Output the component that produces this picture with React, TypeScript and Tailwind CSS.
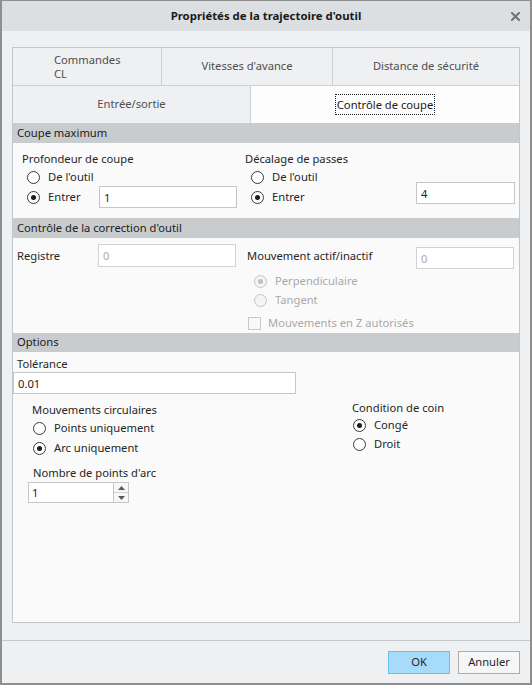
import React from "react";

type RadioProps = {
  label: string;
  checked?: boolean;
  disabled?: boolean;
  row?: string;
};

function Radio({ label, checked = false, disabled = false, row = "h-[20px]" }: RadioProps) {
  return (
    <div className={`flex items-center ${row}`}>
      <span
        className={`flex h-[13px] w-[13px] shrink-0 items-center justify-center rounded-full border ${
          disabled ? "border-[#c4c4c4] bg-[#f4f4f4]" : "border-[#3a3a3a] bg-white"
        }`}
      >
        {checked && (
          <span className={`h-[5px] w-[5px] rounded-full ${disabled ? "bg-[#c0c0c0]" : "bg-[#1c1c1c]"}`} />
        )}
      </span>
      <span className={`ml-[8px] whitespace-nowrap ${disabled ? "text-[#a9a9a9]" : "text-[#262626]"}`}>{label}</span>
    </div>
  );
}

function Field({ value, disabled = false, className }: { value: string; disabled?: boolean; className: string }) {
  return (
    <input
      readOnly
      value={value}
      disabled={disabled}
      className={`border bg-white px-[4px] outline-none ${
        disabled ? "border-[#d2d2d2] text-[#ababab]" : "border-[#c6c6c6] text-[#1c1c1c]"
      } ${className}`}
    />
  );
}

function SectionHeader({ title, h }: { title: string; h: string }) {
  return <div className={`flex shrink-0 items-center bg-[#c9ccce] pl-[4px] text-[#202020] ${h}`}>{title}</div>;
}

export default function App() {
  return (
    <div className="flex h-[685px] w-[532px] flex-col border-x-2 border-b-2 border-t border-[#8e8e8e] bg-[#eef0f2] font-['Noto_Sans','Segoe_UI',sans-serif] text-[11.2px] text-[#262626]">
      {/* title bar */}
      <div className="grid h-[30px] shrink-0 grid-cols-[1fr_auto_1fr] items-center bg-[#dcdfe1]">
        <div />
        <div className="text-[11.4px] font-bold text-[#1a1a1a]">Propriétés de la trajectoire d'outil</div>
        <div className="flex justify-end pr-[10px]">
          <svg width="9" height="9" viewBox="0 0 9 9">
            <path d="M1 1 L8 8 M8 1 L1 8" stroke="#727272" strokeWidth="2" strokeLinecap="square" />
          </svg>
        </div>
      </div>

      {/* body */}
      <div className="flex flex-1 flex-col px-[10px] pb-[17px] pt-[16px]">
        <div className="flex flex-1 flex-col border border-[#c4c7ca] bg-[#fafafa]">
          {/* tab rows */}
          <div className="flex h-[38px] shrink-0 border-b border-[#cdd0d3] bg-[#eef0f2] text-[#4e4e4e]">
            <div className="flex w-[149px] items-center justify-center border-r border-[#cdd0d3]">
              <div className="w-[68px] pl-[1px] leading-[14px]">
                Commandes
                <br />
                CL
              </div>
            </div>
            <div className="flex w-[171px] items-center justify-center border-r border-[#cdd0d3]">Vitesses d'avance</div>
            <div className="flex flex-1 items-center justify-center">Distance de sécurité</div>
          </div>
          <div className="flex h-[37px] shrink-0">
            <div className="flex w-[238px] items-center justify-center border-r border-[#cdd0d3] bg-[#eef0f2] text-[#4e4e4e]">
              Entrée/sortie
            </div>
            <div className="flex flex-1 items-center justify-center bg-[#fdfdfd] text-[#1a1a1a]">
              <span className="border border-dotted border-[#222] px-[1px] py-[1px] leading-[17px]">Contrôle de coupe</span>
            </div>
          </div>

          {/* Coupe maximum */}
          <SectionHeader title="Coupe maximum" h="h-[20px]" />
          <div className="flex h-[75px] shrink-0 pt-[7px]">
            <div className="w-[232px] pl-[9px]">
              <div className="h-[17px] leading-[17px]">Profondeur de coupe</div>
              <div className="pl-[5px]">
                <Radio label="De l'outil" />
                <div className="flex h-[20px] items-center">
                  <div className="w-[72px]">
                    <Radio label="Entrer" checked />
                  </div>
                  <Field value="1" className="h-[22px] w-[138px]" />
                </div>
              </div>
            </div>
            <div className="flex-1">
              <div className="h-[17px] leading-[17px]">Décalage de passes</div>
              <div className="flex">
                <div className="w-[171px] pl-[6px]">
                  <Radio label="De l'outil" />
                  <Radio label="Entrer" checked />
                </div>
                <Field value="4" className="mt-[15px] h-[22px] w-[99px]" />
              </div>
            </div>
          </div>

          {/* Contrôle de la correction d'outil */}
          <SectionHeader title="Contrôle de la correction d'outil" h="h-[20px]" />
          <div className="flex h-[95px] shrink-0 pt-[6px]">
            <div className="flex w-[234px] items-start pl-[4px]">
              <div className="h-[23px] w-[81px] leading-[23px]">Registre</div>
              <Field value="0" disabled className="h-[23px] w-[138px]" />
            </div>
            <div className="flex-1">
              <div className="flex items-start">
                <div className="h-[23px] w-[169px] leading-[23px]">Mouvement actif/inactif</div>
                <Field value="0" disabled className="mt-[3px] h-[22px] w-[98px]" />
              </div>
              <div className="mt-[3px] pl-[7px]">
                <Radio label="Perpendiculaire" checked disabled row="h-[19px]" />
                <Radio label="Tangent" disabled row="h-[19px]" />
              </div>
              <div className="mt-[3px] flex h-[20px] items-center pl-[1px]">
                <span className="h-[13px] w-[13px] border border-[#c8c8c8] bg-[#f8f8f8]" />
                <span className="ml-[7px] text-[#a9a9a9]">Mouvements en Z autorisés</span>
              </div>
            </div>
          </div>

          {/* Options */}
          <SectionHeader title="Options" h="h-[19px]" />
          <div className="flex flex-1 flex-col pt-[3px]">
            <div className="h-[17px] pl-[4px] leading-[17px]">Tolérance</div>
            <Field value="0.01" className="h-[22px] w-[283px]" />
            <div className="flex">
              <div className="w-[339px] pl-[15px] pt-[7px]">
                <div className="h-[17px] pl-[4px] leading-[17px]">Mouvements circulaires</div>
                <div className="pl-[5px]">
                  <Radio label="Points uniquement" />
                  <Radio label="Arc uniquement" checked />
                </div>
                <div className="mt-[6px] h-[17px] pl-[5px] leading-[17px]">Nombre de points d'arc</div>
                <div className="mt-[1px] flex h-[21px] w-[101px] border border-[#c6c6c6] bg-white">
                  <div className="flex-1 pl-[3px] leading-[19px] text-[#1c1c1c]">1</div>
                  <div className="flex w-[15px] flex-col border-l border-[#c6c6c6]">
                    <div className="flex flex-1 items-center justify-center border-b border-[#d4d4d4] bg-[#f7f7f7]">
                      <svg width="7" height="4" viewBox="0 0 7 4">
                        <path d="M0 4 L3.5 0 L7 4 Z" fill="#5a5a5a" />
                      </svg>
                    </div>
                    <div className="flex flex-1 items-center justify-center bg-[#f7f7f7]">
                      <svg width="7" height="4" viewBox="0 0 7 4">
                        <path d="M0 0 L7 0 L3.5 4 Z" fill="#5a5a5a" />
                      </svg>
                    </div>
                  </div>
                </div>
              </div>
              <div className="pt-[5px]">
                <div className="h-[17px] leading-[17px]">Condition de coin</div>
                <div className="pl-[1px]">
                  <Radio label="Congé" checked row="h-[19px]" />
                  <Radio label="Droit" row="h-[19px]" />
                </div>
              </div>
            </div>
          </div>
        </div>
      </div>

      {/* footer */}
      <div className="flex shrink-0 justify-end gap-[8px] border-t border-[#c6c9cc] pb-[9px] pr-[10px] pt-[10px]">
        <button className="h-[23px] w-[62px] border border-[#62c3f3] bg-[#a6dcf9] text-[#262626]">OK</button>
        <button className="h-[23px] w-[62px] border border-[#acacac] bg-[#f6f6f6] text-[#262626]">Annuler</button>
      </div>
    </div>
  );
}
